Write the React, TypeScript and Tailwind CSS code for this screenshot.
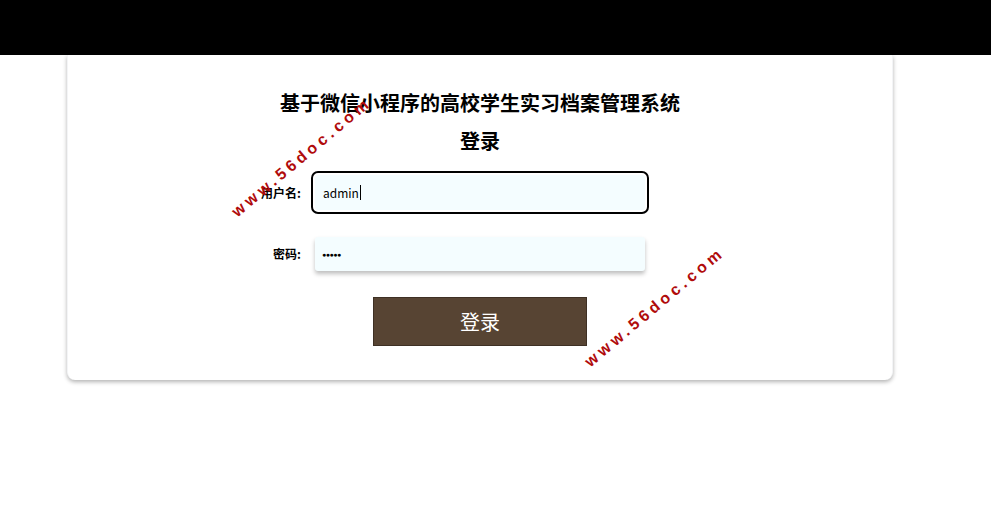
import React from "react";

const FONT = '"Noto Sans CJK SC", "Noto Sans", "Liberation Sans", sans-serif';

function Watermark({ className }: { className: string }) {
    return (
        <div
            className={`pointer-events-none absolute origin-left -rotate-[40deg] whitespace-nowrap text-[16px] font-bold leading-none tracking-[4px] text-[#b00b0b] ${className}`}
            style={{ fontFamily: '"Liberation Sans", sans-serif' }}
        >
            www.56doc.com
        </div>
    );
}

export default function App() {
    return (
        <div className="relative min-h-[529px] w-full bg-white" style={{ fontFamily: FONT }}>
            {/* barra superior */}
            <div className="h-[55px] w-full bg-black" />

            <div className="px-[67px]">
                <div className="w-[826px] rounded-b-lg border-x border-gray-100 bg-white pb-[34px] pt-[34px] shadow-[0_2px_4px_rgba(0,0,0,0.3)]">
                    <h1 className="h-7 text-center text-[20px] font-bold leading-7 text-black">
                        基于微信小程序的高校学生实习档案管理系统
                    </h1>
                    <h2 className="mt-[10px] h-7 text-center text-[20px] font-bold leading-7 text-black">登录</h2>

                    {/* usuario */}
                    <div className="mt-[20px] grid grid-cols-[1fr_330px_1fr] items-center">
                        <label className="pr-[14px] text-right text-[12px] font-bold text-black">用户名:</label>
                        <div className="flex h-[35px] items-center rounded-[3px] bg-[#f4fdff] px-[8px] text-[12px] text-black outline-2 outline-offset-2 outline-black">
                            admin<span className="ml-px h-[15px] w-px bg-black" />
                        </div>
                        <div />
                    </div>

                    {/* contraseña */}
                    <div className="mt-[27px] grid grid-cols-[1fr_330px_1fr] items-center">
                        <label className="pr-[14px] text-right text-[12px] font-bold text-black">密码:</label>
                        <div className="flex h-[34px] items-center rounded-[3px] bg-[#f4fdff] px-[7px] text-black shadow-[0_3px_4px_rgba(0,0,0,0.25)]">
                            <span className="text-[7px] leading-none tracking-[-0.5px]" style={{ fontFamily: '"Liberation Sans", sans-serif' }}>
                                ●●●●●
                            </span>
                        </div>
                        <div />
                    </div>

                    <div className="mt-[26px] flex justify-center">
                        <button
                            type="button"
                            className="h-[49px] w-[214px] border border-[#3e3024] bg-[#574433] text-[20px] text-white"
                        >
                            登录
                        </button>
                    </div>
                </div>
            </div>

            <Watermark className="left-[234px] top-[206px]" />
            <Watermark className="left-[587px] top-[356px]" />
        </div>
    );
}
